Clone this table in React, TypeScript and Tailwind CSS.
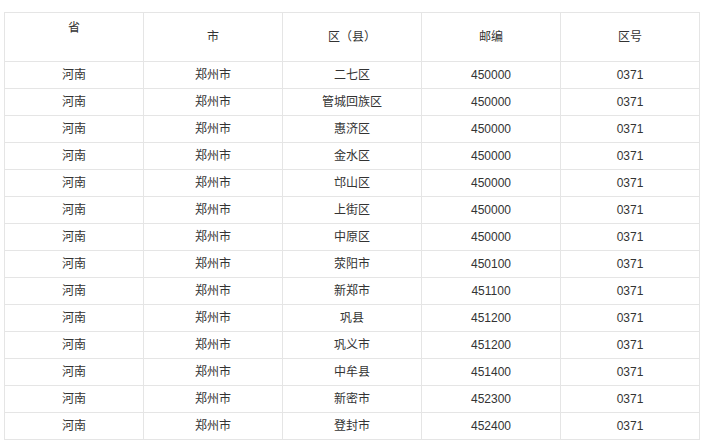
import React from "react";

const rows: [string, string, string, string, string][] = [
  ["河南", "郑州市", "二七区", "450000", "0371"],
  ["河南", "郑州市", "管城回族区", "450000", "0371"],
  ["河南", "郑州市", "惠济区", "450000", "0371"],
  ["河南", "郑州市", "金水区", "450000", "0371"],
  ["河南", "郑州市", "邙山区", "450000", "0371"],
  ["河南", "郑州市", "上街区", "450000", "0371"],
  ["河南", "郑州市", "中原区", "450000", "0371"],
  ["河南", "郑州市", "荥阳市", "450100", "0371"],
  ["河南", "郑州市", "新郑市", "451100", "0371"],
  ["河南", "郑州市", "巩县", "451200", "0371"],
  ["河南", "郑州市", "巩义市", "451200", "0371"],
  ["河南", "郑州市", "中牟县", "451400", "0371"],
  ["河南", "郑州市", "新密市", "452300", "0371"],
  ["河南", "郑州市", "登封市", "452400", "0371"],
];

export default function App() {
  return (
    <div
      className="bg-white w-[713px] h-[441px] overflow-hidden pt-[12px] pl-[4px] text-[12px] text-[#333]"
      style={{ fontFamily: '"Liberation Sans", "Noto Sans CJK SC", sans-serif' }}
    >
      <table className="w-[696px] table-fixed border-collapse">
        <thead>
          <tr>
            <th className="h-[49px] border border-[#e5e5e5] align-top pt-[6px] font-normal">省</th>
            <th className="border border-[#e5e5e5] align-middle font-normal">市</th>
            <th className="border border-[#e5e5e5] align-middle font-normal">区（县）</th>
            <th className="border border-[#e5e5e5] align-middle font-normal">邮编</th>
            <th className="border border-[#e5e5e5] align-middle font-normal">区号</th>
          </tr>
        </thead>
        <tbody>
          {rows.map((r, i) => (
            <tr key={i}>
              {r.map((c, j) => (
                <td key={j} className="h-[27px] p-0 border border-[#e5e5e5] text-center align-middle leading-[14px]">
                  {c}
                </td>
              ))}
            </tr>
          ))}
        </tbody>
      </table>
    </div>
  );
}
